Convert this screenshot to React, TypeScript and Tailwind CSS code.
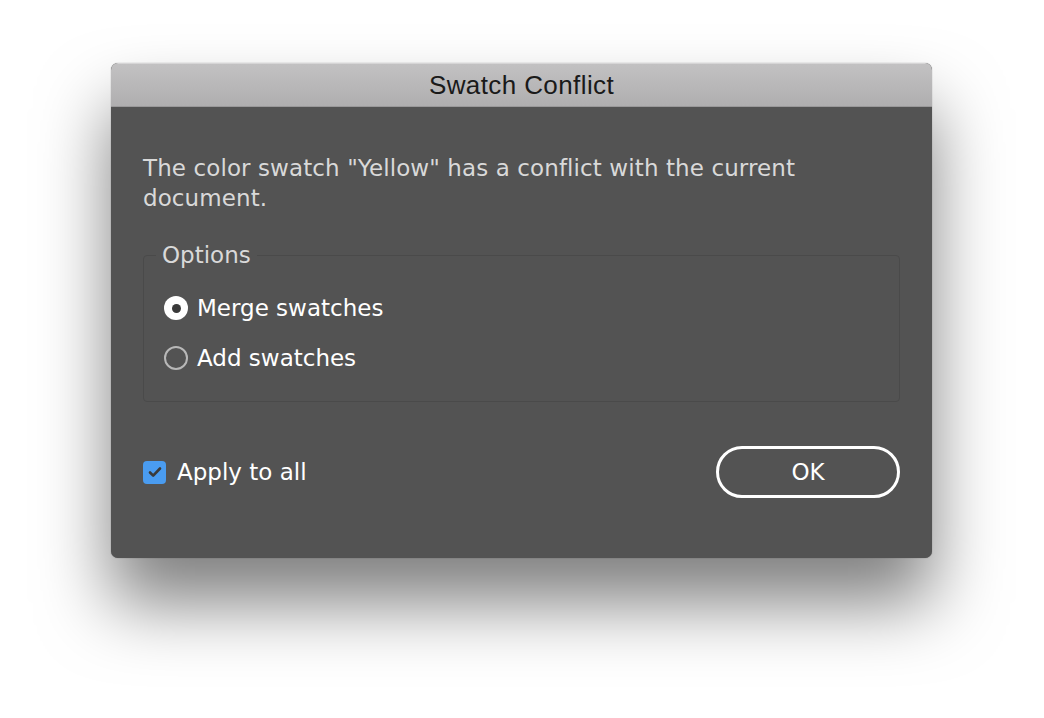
export default function App() {
  return (
    <div className="min-h-[718px] w-[1044px] bg-white pl-[111px] pt-[63px]">
      <div className="flex h-[495px] w-[821px] flex-col overflow-hidden rounded-[7px] bg-[#535353] shadow-[0_45px_70px_rgba(0,0,0,0.5),0_0_1px_rgba(0,0,0,0.5)]">
        {/* title bar */}
        <div className="flex h-[44px] shrink-0 items-center justify-center border-t border-[#d6d5d6] bg-gradient-to-b from-[#c2c1c2] to-[#afaeaf] shadow-[inset_0_-1px_0_#9a999a]">
          <span className="[font-family:'Liberation_Sans',sans-serif] text-[26px] tracking-[0.4px] text-[#1a1a1a]">
            Swatch Conflict
          </span>
        </div>

        <div className="flex flex-1 flex-col px-[32px] pt-[46px] [font-family:'DejaVu_Sans',sans-serif]">
          <p className="text-[23px] leading-[30px] tracking-[0.1px] text-[#d9d9d9]">
            The color swatch "Yellow" has a conflict with the current
            <br />
            document.
          </p>

          <fieldset className="mt-[30px] h-[159px] rounded-[4px] border border-[#4a4a4a] px-[20px]">
            <legend className="ml-[-8px] px-[6px] text-[23px] leading-[24px] text-[#d9d9d9]">Options</legend>
            <div className="mt-[28px] flex flex-col gap-[24px]">
              <label className="flex items-center gap-[9px] text-[23px] leading-[26px] text-white">
                <span className="flex h-[24px] w-[24px] items-center justify-center rounded-full bg-white">
                  <span className="h-[9px] w-[9px] rounded-full bg-[#3a3a3a]" />
                </span>
                Merge swatches
              </label>
              <label className="flex items-center gap-[9px] text-[23px] leading-[26px] text-white">
                <span className="h-[24px] w-[24px] rounded-full border-2 border-[#b8b8b8]" />
                Add swatches
              </label>
            </div>
          </fieldset>

          <div className="mt-[44px] flex items-center justify-between">
            <label className="flex items-center gap-[11px] text-[23px] leading-[26px] text-white">
              <span className="flex h-[23px] w-[23px] items-center justify-center rounded-[4px] bg-[#4a9cf0]">
                <svg width="16" height="16" viewBox="0 0 16 16" fill="none">
                  <path d="M3 8.5l3.2 3.2L13 4.5" stroke="#3a3a3a" strokeWidth="2.6" strokeLinecap="round" strokeLinejoin="round" />
                </svg>
              </span>
              Apply to all
            </label>
            <button className="flex h-[52px] w-[184px] items-center justify-center rounded-full border-[3px] border-white text-[23px] text-white">
              OK
            </button>
          </div>
        </div>
      </div>
    </div>
  );
}
